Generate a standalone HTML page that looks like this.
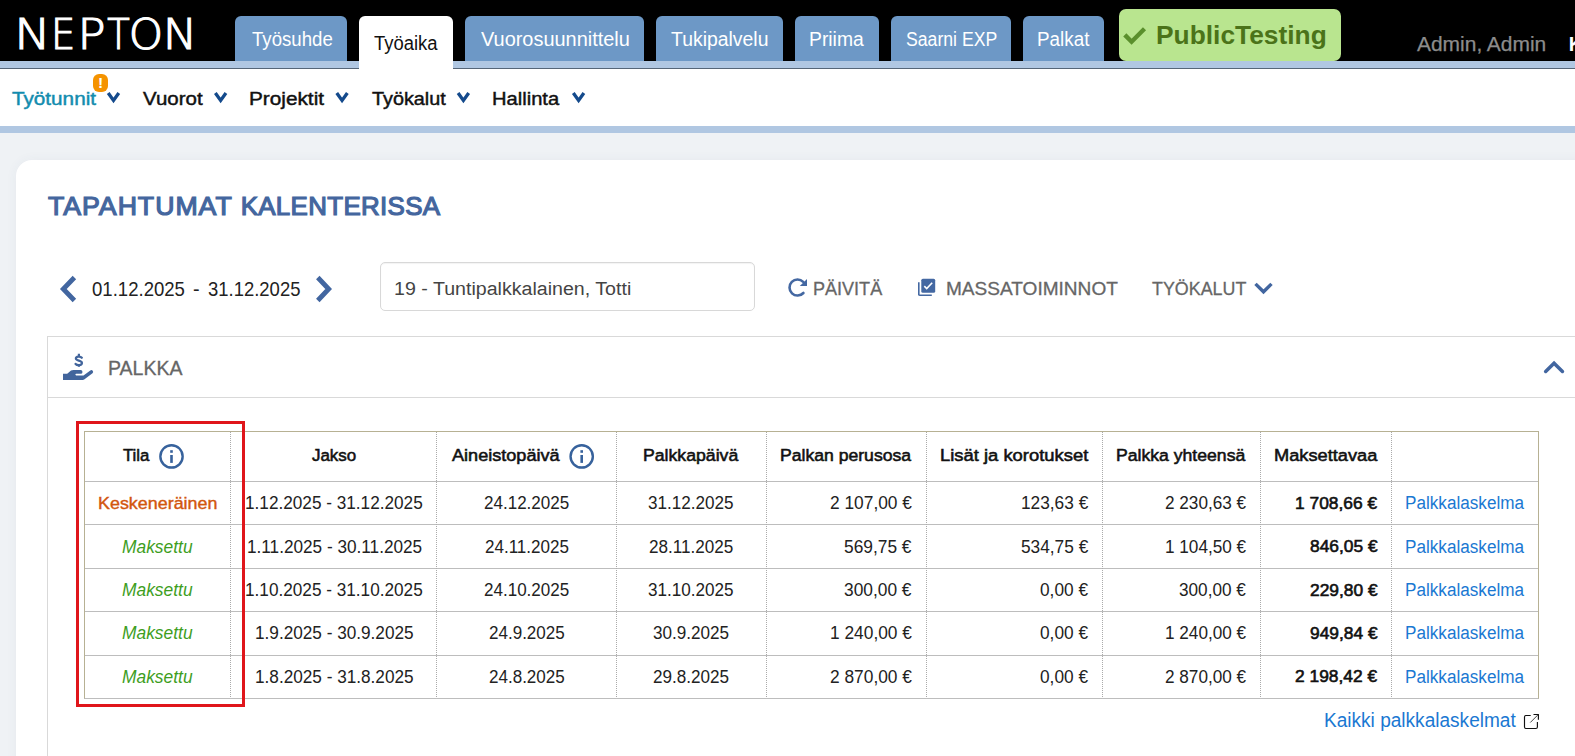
<!DOCTYPE html>
<html lang="fi"><head><meta charset="utf-8"><title>Nepton</title>
<style>
html,body{margin:0;padding:0}
body{width:1575px;height:756px;overflow:hidden;position:relative;background:#eff2f5;font-family:"Liberation Sans",sans-serif}
.a{position:absolute}
.t{position:absolute;white-space:nowrap;transform-origin:0 0}
.tab{position:absolute;top:16px;height:45px;background:#6d98c6;border-radius:6px 6px 0 0}
.vd{position:absolute;top:432px;height:266px;width:1px;background-image:linear-gradient(to bottom,#aaa 50%,transparent 50%);background-size:1px 2px}
.hl{position:absolute;left:85px;width:1453px;height:1px;background:#bdbdbd}
svg{position:absolute;overflow:visible}
</style></head><body>
<!-- header -->
<div class="a" style="left:0;top:0;width:1575px;height:61px;background:#000"></div>
<div class="a" style="left:0;top:61px;width:1575px;height:7px;background:#b0c7e2"></div>
<div class="a" style="left:0;top:68px;width:1575px;height:1px;background:#566678"></div>
<div class="a" style="left:0;top:69px;width:1575px;height:57px;background:#fff"></div>
<div class="a" style="left:0;top:126px;width:1575px;height:7px;background:#b0c7e2"></div>
<div class="tab" style="left:235px;width:112px"></div>
<div class="tab" style="left:359px;width:94px;height:53px;background:#fff"></div>
<div class="tab" style="left:465px;width:179px"></div>
<div class="tab" style="left:656px;width:127px"></div>
<div class="tab" style="left:795px;width:84px"></div>
<div class="tab" style="left:891px;width:120px"></div>
<div class="tab" style="left:1023px;width:81px"></div>
<div class="a" style="left:1119px;top:9px;width:222px;height:52px;background:#b9e58f;border-radius:7px"></div>
<!-- logo -->
<svg width="200" height="61" style="left:0;top:0"><text y="49" font-family="DejaVu Sans, sans-serif" font-weight="200" font-size="42.2" fill="#fff" stroke="#fff" stroke-width="1.2"><tspan x="14.27" textLength="36.38" lengthAdjust="spacingAndGlyphs">N</tspan><tspan x="51.04" textLength="24.27" lengthAdjust="spacingAndGlyphs">E</tspan><tspan x="77.57" textLength="28.08" lengthAdjust="spacingAndGlyphs">P</tspan><tspan x="107.35" textLength="22.46" lengthAdjust="spacingAndGlyphs">T</tspan><tspan x="128.81" textLength="34.35" lengthAdjust="spacingAndGlyphs">O</tspan><tspan x="162.71" textLength="34.54" lengthAdjust="spacingAndGlyphs">N</tspan></text></svg>
<!-- green check -->
<svg style="left:0;top:0" width="1575" height="61"><path d="M1124.8 34.85 L1131.6 41.7 L1144.5 28.8" fill="none" stroke="#5a8f2c" stroke-width="4.4" stroke-linejoin="miter"/></svg>
<!-- badge -->
<div class="a" style="left:93px;top:74px;width:15px;height:18px;border-radius:6px;background:#f59300"></div>
<!-- submenu chevrons -->
<svg style="left:0;top:0" width="600" height="126"><g fill="none" stroke="#144a8c" stroke-width="3.3">
<path d="M108.2 93 l5.3 7.5 l5.3 -7.5"/><path d="M215.35 93 l5.3 7.5 l5.3 -7.5"/><path d="M336.75 93 l5.3 7.5 l5.3 -7.5"/><path d="M458.1 93 l5.3 7.5 l5.3 -7.5"/><path d="M573.3 93 l5.3 7.5 l5.3 -7.5"/>
</g></svg>
<!-- card -->
<div class="a" style="left:16px;top:160px;width:1600px;height:700px;background:#fff;border-radius:16px 0 0 0;box-shadow:0 0 12px rgba(60,80,110,.05)"></div>
<!-- date chevrons -->
<svg style="left:0;top:0" width="1575" height="756"><g fill="none" stroke="#4266a0" stroke-width="4.8" stroke-linejoin="miter">
<path d="M74.4 277.5 L63.3 289 L74.4 300.5"/><path d="M317.8 277.5 L328.7 289 L317.8 300.5"/>
</g>
<g fill="none" stroke="#4266a0" stroke-width="3.4" stroke-linejoin="miter">
<path d="M1255.5 283.9 L1263.5 291.8 L1271.5 283.9"/>
<path d="M1545.65 371.45 L1554.05 363.2 L1562.45 371.45" stroke-width="3.5" stroke-linecap="round"/>
</g></svg>
<!-- input -->
<div class="a" style="left:380px;top:262px;width:373px;height:46.5px;border:1px solid #d8d8d8;box-shadow:inset 0 1px 1px rgba(0,0,0,.05);border-radius:5px;background:#fff"></div>
<!-- refresh icon -->
<svg style="left:788px;top:278px" width="20" height="20" viewBox="0 0 20 20"><path d="M15.2 3.9 A8 8 0 1 0 15.4 15" fill="none" stroke="#4468a2" stroke-width="2.6" stroke-linecap="round"/><path d="M19 1 V7.9 H11.8 Z" fill="#4468a2"/></svg>
<!-- mass icon -->
<svg style="left:917px;top:278px" width="20" height="20" viewBox="0 0 20 20"><rect x="4.3" y="0.7" width="13.9" height="14.1" rx="1.6" fill="#4468a2"/><path d="M1.8 4.3 V16.4 a0.9 0.9 0 0 0 0.9 0.9 H14.8" fill="none" stroke="#4468a2" stroke-width="1.6"/><path d="M7.3 8.1 L9.7 10.5 L15.2 4.7" fill="none" stroke="#fff" stroke-width="1.6"/></svg>
<!-- panel -->
<div class="a" style="left:47px;top:336px;width:1600px;height:500px;border:1px solid #d9d9d9;border-right:0;border-bottom:0"></div>
<div class="a" style="left:48px;top:397px;width:1600px;height:1px;background:#d9d9d9"></div>
<!-- hand icon -->
<svg style="left:63px;top:353px" width="30" height="28" viewBox="0 0 30 28"><path d="M0 20.8 H4.2 L8 17.6 Q9 17 10.5 17 H17.6 a1.9 1.9 0 0 1 0 3.8 H13.2 a0.8 0.8 0 0 0 0 1.6 H20.5 L27.3 17.6 a1.7 1.7 0 0 1 2.2 2.6 L21.2 26.6 Q20.6 27 19.8 27 H0 Z" fill="#42659c"/>
<path d="M18.8 4.7 C17.6 3.2 12.9 3 12.9 5.6 C12.9 8.2 18.9 7.2 18.9 10 C18.9 12.7 14 12.6 12.6 10.9" fill="none" stroke="#42659c" stroke-width="2.3" stroke-linecap="round"/><path d="M15.9 0.8 V3.6 M15.9 11.6 V13.8" fill="none" stroke="#42659c" stroke-width="2.2"/></svg>
<!-- table -->
<div class="a" style="left:84px;top:431px;width:1453px;height:266px;border:1px solid #b7b193;border-bottom-color:#bdbdbd"></div>
<div class="hl" style="top:481px"></div><div class="hl" style="top:524px"></div><div class="hl" style="top:568px"></div><div class="hl" style="top:611px"></div><div class="hl" style="top:655px"></div>
<div class="vd" style="left:230px"></div><div class="vd" style="left:436px"></div><div class="vd" style="left:616px"></div><div class="vd" style="left:766px"></div><div class="vd" style="left:926px"></div><div class="vd" style="left:1102px"></div><div class="vd" style="left:1260px"></div><div class="vd" style="left:1391px"></div>
<!-- info icons -->
<svg style="left:0;top:0" width="700" height="500"><g fill="none" stroke="#37629c" stroke-width="2.4"><circle cx="171.5" cy="456.4" r="11.15"/><circle cx="581.7" cy="456.4" r="11.15"/></g>
<g fill="#37629c"><rect x="170.2" y="450.2" width="2.6" height="2.6"/><rect x="170.2" y="455" width="2.6" height="7.9"/><rect x="580.4" y="450.2" width="2.6" height="2.6"/><rect x="580.4" y="455" width="2.6" height="7.9"/></g></svg>
<!-- red box -->
<div class="a" style="left:76px;top:421px;width:163px;height:279.5px;border:3px solid #e0161b"></div>
<!-- external link icon -->
<svg style="left:0;top:0" width="1575" height="756"><path d="M1530.7 715.45 H1526 a1.5 1.5 0 0 0 -1.5 1.5 V727 a1.5 1.5 0 0 0 1.5 1.5 H1535.9 a1.5 1.5 0 0 0 1.5 -1.5 V721.9" fill="none" stroke="#111" stroke-width="1.15"/><path d="M1533.5 714.5 H1538.4 V719.8" fill="none" stroke="#111" stroke-width="1.15"/><path d="M1530.3 722.5 L1538.2 714.6" fill="none" stroke="#444" stroke-width="1"/></svg>
<header>
<div class="t" style="left:251.62px;top:26.70px;font-size:19.6px;line-height:24px;color:#fff;letter-spacing:0.000px;transform:scaleX(0.9511)">Työsuhde</div>
<div class="t" style="left:373.82px;top:30.50px;font-size:19.6px;line-height:24px;color:#111;letter-spacing:0.000px;transform:scaleX(0.9412)">Työaika</div>
<div class="t" style="left:481.00px;top:26.70px;font-size:19.6px;line-height:24px;color:#fff;letter-spacing:0.000px;transform:scaleX(1.0174)">Vuorosuunnittelu</div>
<div class="t" style="left:671.30px;top:26.70px;font-size:19.6px;line-height:24px;color:#fff;letter-spacing:0.000px;transform:scaleX(0.9906)">Tukipalvelu</div>
<div class="t" style="left:809.02px;top:26.70px;font-size:19.6px;line-height:24px;color:#fff;letter-spacing:0.000px;transform:scaleX(0.9864)">Priima</div>
<div class="t" style="left:905.78px;top:26.70px;font-size:19.6px;line-height:24px;color:#fff;letter-spacing:0.000px;transform:scaleX(0.9011)">Saarni EXP</div>
<div class="t" style="left:1037.46px;top:26.70px;font-size:19.6px;line-height:24px;color:#fff;letter-spacing:0.000px;transform:scaleX(0.9616)">Palkat</div>
<div class="t" style="left:1156.35px;top:19.80px;font-size:26px;line-height:31px;color:#4b7319;letter-spacing:0.000px;font-weight:700;transform:scaleX(1.0131)">PublicTesting</div>
<div class="t" style="left:1416.83px;top:31.77px;font-size:19.65px;line-height:24px;color:#8c8c8c;letter-spacing:0.000px;-webkit-text-stroke:0.25px #8c8c8c;transform:scaleX(1.0666)">Admin, Admin</div>
<div class="t" style="left:1568.70px;top:31.80px;font-size:19.6px;line-height:24px;color:#fff;letter-spacing:0.000px;font-weight:700">K</div>
</header>
<nav>
<div class="t" style="left:11.79px;top:86.58px;font-size:18.97px;line-height:23px;color:#128cae;letter-spacing:0.000px;-webkit-text-stroke:0.45px #128cae;transform:scaleX(1.0921)">Työtunnit</div>
<div class="t" style="left:143.22px;top:86.58px;font-size:18.97px;line-height:23px;color:#111;letter-spacing:0.000px;-webkit-text-stroke:0.45px #111;transform:scaleX(1.0805)">Vuorot</div>
<div class="t" style="left:248.98px;top:86.58px;font-size:18.97px;line-height:23px;color:#111;letter-spacing:0.000px;-webkit-text-stroke:0.45px #111;transform:scaleX(1.0956)">Projektit</div>
<div class="t" style="left:371.61px;top:86.58px;font-size:18.97px;line-height:23px;color:#111;letter-spacing:0.000px;-webkit-text-stroke:0.45px #111;transform:scaleX(1.0453)">Työkalut</div>
<div class="t" style="left:492.33px;top:86.58px;font-size:18.97px;line-height:23px;color:#111;letter-spacing:0.000px;-webkit-text-stroke:0.45px #111;transform:scaleX(1.0621)">Hallinta</div>
<div class="t" style="left:98.00px;top:73.10px;font-size:15.5px;line-height:19px;color:#fff;letter-spacing:0.000px;font-weight:700">!</div>
</nav>
<main>
<div class="t" style="left:48.38px;top:191.40px;font-size:25.92px;line-height:31px;color:#44669e;letter-spacing:0.946px;-webkit-text-stroke:1.2px #44669e;transform:scaleX(1.0300)">TAPAHTUMAT</div>
<div class="t" style="left:240.67px;top:191.40px;font-size:25.92px;line-height:31px;color:#44669e;letter-spacing:0.327px;-webkit-text-stroke:1.2px #44669e">KALENTERISSA</div>
<div class="t" style="left:91.54px;top:277.00px;font-size:19.8px;line-height:24px;color:#222;letter-spacing:0.000px;transform:scaleX(0.9387)">01.12.2025</div>
<div class="t" style="left:193.00px;top:277.00px;font-size:19.8px;line-height:24px;color:#222;letter-spacing:0.000px">-</div>
<div class="t" style="left:207.55px;top:277.00px;font-size:19.8px;line-height:24px;color:#222;letter-spacing:0.000px;transform:scaleX(0.9335)">31.12.2025</div>
<div class="t" style="left:393.97px;top:276.80px;font-size:19.2px;line-height:23px;color:#444;letter-spacing:0.000px;transform:scaleX(1.0219)">19 - Tuntipalkkalainen, Totti</div>
<div class="t" style="left:813.34px;top:276.65px;font-size:19.18px;line-height:23px;color:#666;letter-spacing:0.000px;-webkit-text-stroke:0.3px #666;transform:scaleX(0.9410)">PÄIVITÄ</div>
<div class="t" style="left:945.76px;top:276.65px;font-size:19.18px;line-height:23px;color:#666;letter-spacing:0.000px;-webkit-text-stroke:0.3px #666;transform:scaleX(0.9938)">MASSATOIMINNOT</div>
<div class="t" style="left:1151.78px;top:276.65px;font-size:19.18px;line-height:23px;color:#666;letter-spacing:0.000px;-webkit-text-stroke:0.3px #666;transform:scaleX(0.9320)">TYÖKALUT</div>
<div class="t" style="left:107.83px;top:354.75px;font-size:20.58px;line-height:25px;color:#666;letter-spacing:0.000px;-webkit-text-stroke:0.3px #666;transform:scaleX(0.9477)">PALKKA</div>
<div class="t" style="left:123.48px;top:445.53px;font-size:16.83px;line-height:20px;color:#111;letter-spacing:0.000px;-webkit-text-stroke:0.55px #111;transform:scaleX(0.9968)">Tila</div>
<div class="t" style="left:311.87px;top:446.03px;font-size:16.83px;line-height:20px;color:#111;letter-spacing:0.000px;-webkit-text-stroke:0.55px #111;transform:scaleX(1.0057)">Jakso</div>
<div class="t" style="left:451.77px;top:445.53px;font-size:16.83px;line-height:20px;color:#111;letter-spacing:0.000px;-webkit-text-stroke:0.55px #111;transform:scaleX(1.0749)">Aineistopäivä</div>
<div class="t" style="left:643.31px;top:446.03px;font-size:16.83px;line-height:20px;color:#111;letter-spacing:0.000px;-webkit-text-stroke:0.55px #111;transform:scaleX(1.0499)">Palkkapäivä</div>
<div class="t" style="left:779.72px;top:446.03px;font-size:16.83px;line-height:20px;color:#111;letter-spacing:0.000px;-webkit-text-stroke:0.55px #111;transform:scaleX(1.0455)">Palkan perusosa</div>
<div class="t" style="left:939.65px;top:446.03px;font-size:16.83px;line-height:20px;color:#111;letter-spacing:0.000px;-webkit-text-stroke:0.55px #111;transform:scaleX(1.0930)">Lisät ja korotukset</div>
<div class="t" style="left:1116.21px;top:446.03px;font-size:16.83px;line-height:20px;color:#111;letter-spacing:0.000px;-webkit-text-stroke:0.55px #111;transform:scaleX(1.0468)">Palkka yhteensä</div>
<div class="t" style="left:1273.97px;top:446.03px;font-size:16.83px;line-height:20px;color:#111;letter-spacing:0.000px;-webkit-text-stroke:0.55px #111;transform:scaleX(1.0828)">Maksettavaa</div>
<div class="t" style="left:97.73px;top:493.60px;font-size:17.04px;line-height:20px;color:#d2560e;letter-spacing:0.000px;-webkit-text-stroke:0.4px #d2560e;transform:scaleX(1.0512)">Keskeneräinen</div>
<div class="t" style="left:245.23px;top:492.80px;font-size:17.6px;line-height:21px;color:#222;letter-spacing:0.000px;transform:scaleX(0.9765)">1.12.2025 - 31.12.2025</div>
<div class="t" style="left:483.93px;top:492.80px;font-size:17.6px;line-height:21px;color:#222;letter-spacing:0.000px;transform:scaleX(0.9677)">24.12.2025</div>
<div class="t" style="left:648.42px;top:492.80px;font-size:17.6px;line-height:21px;color:#222;letter-spacing:0.000px;transform:scaleX(0.9712)">31.12.2025</div>
<div class="t" style="left:829.81px;top:492.80px;font-size:17.6px;line-height:21px;color:#222;letter-spacing:0.000px;transform:scaleX(0.9854)">2 107,00 €</div>
<div class="t" style="left:1021.02px;top:492.80px;font-size:17.6px;line-height:21px;color:#222;letter-spacing:0.000px;transform:scaleX(0.9818)">123,63 €</div>
<div class="t" style="left:1164.82px;top:492.80px;font-size:17.6px;line-height:21px;color:#222;letter-spacing:0.000px;transform:scaleX(0.9757)">2 230,63 €</div>
<div class="t" style="left:1295.46px;top:493.50px;font-size:16.76px;line-height:20px;color:#111;letter-spacing:0.000px;-webkit-text-stroke:0.6px #111;transform:scaleX(1.0361)">1 708,66 €</div>
<div class="t" style="left:1404.94px;top:492.80px;font-size:17.6px;line-height:21px;color:#1a78d2;letter-spacing:0.000px;transform:scaleX(0.9737)">Palkkalaskelma</div>
<div class="t" style="left:122.21px;top:536.50px;font-size:17.6px;line-height:21px;color:#3e9e1e;letter-spacing:0.000px;font-style:italic;transform:scaleX(0.9884)">Maksettu</div>
<div class="t" style="left:246.51px;top:536.50px;font-size:17.6px;line-height:21px;color:#222;letter-spacing:0.000px;transform:scaleX(0.9765)">1.11.2025 - 30.11.2025</div>
<div class="t" style="left:484.56px;top:536.50px;font-size:17.6px;line-height:21px;color:#222;letter-spacing:0.000px;transform:scaleX(0.9677)">24.11.2025</div>
<div class="t" style="left:649.00px;top:536.50px;font-size:17.6px;line-height:21px;color:#222;letter-spacing:0.000px;transform:scaleX(0.9712)">28.11.2025</div>
<div class="t" style="left:844.28px;top:536.50px;font-size:17.6px;line-height:21px;color:#222;letter-spacing:0.000px;transform:scaleX(0.9854)">569,75 €</div>
<div class="t" style="left:1021.02px;top:536.50px;font-size:17.6px;line-height:21px;color:#222;letter-spacing:0.000px;transform:scaleX(0.9818)">534,75 €</div>
<div class="t" style="left:1164.82px;top:536.50px;font-size:17.6px;line-height:21px;color:#222;letter-spacing:0.000px;transform:scaleX(0.9757)">1 104,50 €</div>
<div class="t" style="left:1309.94px;top:537.20px;font-size:16.76px;line-height:20px;color:#111;letter-spacing:0.000px;-webkit-text-stroke:0.6px #111;transform:scaleX(1.0361)">846,05 €</div>
<div class="t" style="left:1404.94px;top:536.50px;font-size:17.6px;line-height:21px;color:#1a78d2;letter-spacing:0.000px;transform:scaleX(0.9737)">Palkkalaskelma</div>
<div class="t" style="left:122.21px;top:579.90px;font-size:17.6px;line-height:21px;color:#3e9e1e;letter-spacing:0.000px;font-style:italic;transform:scaleX(0.9884)">Maksettu</div>
<div class="t" style="left:245.23px;top:579.90px;font-size:17.6px;line-height:21px;color:#222;letter-spacing:0.000px;transform:scaleX(0.9765)">1.10.2025 - 31.10.2025</div>
<div class="t" style="left:483.93px;top:579.90px;font-size:17.6px;line-height:21px;color:#222;letter-spacing:0.000px;transform:scaleX(0.9677)">24.10.2025</div>
<div class="t" style="left:648.47px;top:579.90px;font-size:17.6px;line-height:21px;color:#222;letter-spacing:0.000px;transform:scaleX(0.9712)">31.10.2025</div>
<div class="t" style="left:844.28px;top:579.90px;font-size:17.6px;line-height:21px;color:#222;letter-spacing:0.000px;transform:scaleX(0.9854)">300,00 €</div>
<div class="t" style="left:1040.24px;top:579.90px;font-size:17.6px;line-height:21px;color:#222;letter-spacing:0.000px;transform:scaleX(0.9818)">0,00 €</div>
<div class="t" style="left:1179.14px;top:579.90px;font-size:17.6px;line-height:21px;color:#222;letter-spacing:0.000px;transform:scaleX(0.9757)">300,00 €</div>
<div class="t" style="left:1309.94px;top:580.60px;font-size:16.76px;line-height:20px;color:#111;letter-spacing:0.000px;-webkit-text-stroke:0.6px #111;transform:scaleX(1.0361)">229,80 €</div>
<div class="t" style="left:1404.94px;top:579.90px;font-size:17.6px;line-height:21px;color:#1a78d2;letter-spacing:0.000px;transform:scaleX(0.9737)">Palkkalaskelma</div>
<div class="t" style="left:122.21px;top:623.30px;font-size:17.6px;line-height:21px;color:#3e9e1e;letter-spacing:0.000px;font-style:italic;transform:scaleX(0.9884)">Maksettu</div>
<div class="t" style="left:254.79px;top:623.30px;font-size:17.6px;line-height:21px;color:#222;letter-spacing:0.000px;transform:scaleX(0.9765)">1.9.2025 - 30.9.2025</div>
<div class="t" style="left:488.66px;top:623.30px;font-size:17.6px;line-height:21px;color:#222;letter-spacing:0.000px;transform:scaleX(0.9677)">24.9.2025</div>
<div class="t" style="left:653.22px;top:623.30px;font-size:17.6px;line-height:21px;color:#222;letter-spacing:0.000px;transform:scaleX(0.9712)">30.9.2025</div>
<div class="t" style="left:829.81px;top:623.30px;font-size:17.6px;line-height:21px;color:#222;letter-spacing:0.000px;transform:scaleX(0.9854)">1 240,00 €</div>
<div class="t" style="left:1040.24px;top:623.30px;font-size:17.6px;line-height:21px;color:#222;letter-spacing:0.000px;transform:scaleX(0.9818)">0,00 €</div>
<div class="t" style="left:1164.82px;top:623.30px;font-size:17.6px;line-height:21px;color:#222;letter-spacing:0.000px;transform:scaleX(0.9757)">1 240,00 €</div>
<div class="t" style="left:1309.94px;top:624.00px;font-size:16.76px;line-height:20px;color:#111;letter-spacing:0.000px;-webkit-text-stroke:0.6px #111;transform:scaleX(1.0361)">949,84 €</div>
<div class="t" style="left:1404.94px;top:623.30px;font-size:17.6px;line-height:21px;color:#1a78d2;letter-spacing:0.000px;transform:scaleX(0.9737)">Palkkalaskelma</div>
<div class="t" style="left:122.21px;top:666.70px;font-size:17.6px;line-height:21px;color:#3e9e1e;letter-spacing:0.000px;font-style:italic;transform:scaleX(0.9884)">Maksettu</div>
<div class="t" style="left:254.79px;top:666.70px;font-size:17.6px;line-height:21px;color:#222;letter-spacing:0.000px;transform:scaleX(0.9765)">1.8.2025 - 31.8.2025</div>
<div class="t" style="left:488.66px;top:666.70px;font-size:17.6px;line-height:21px;color:#222;letter-spacing:0.000px;transform:scaleX(0.9677)">24.8.2025</div>
<div class="t" style="left:653.12px;top:666.70px;font-size:17.6px;line-height:21px;color:#222;letter-spacing:0.000px;transform:scaleX(0.9712)">29.8.2025</div>
<div class="t" style="left:829.81px;top:666.70px;font-size:17.6px;line-height:21px;color:#222;letter-spacing:0.000px;transform:scaleX(0.9854)">2 870,00 €</div>
<div class="t" style="left:1040.24px;top:666.70px;font-size:17.6px;line-height:21px;color:#222;letter-spacing:0.000px;transform:scaleX(0.9818)">0,00 €</div>
<div class="t" style="left:1164.82px;top:666.70px;font-size:17.6px;line-height:21px;color:#222;letter-spacing:0.000px;transform:scaleX(0.9757)">2 870,00 €</div>
<div class="t" style="left:1295.46px;top:667.40px;font-size:16.76px;line-height:20px;color:#111;letter-spacing:0.000px;-webkit-text-stroke:0.6px #111;transform:scaleX(1.0361)">2 198,42 €</div>
<div class="t" style="left:1404.94px;top:666.70px;font-size:17.6px;line-height:21px;color:#1a78d2;letter-spacing:0.000px;transform:scaleX(0.9737)">Palkkalaskelma</div>
<div class="t" style="left:1324.23px;top:708.80px;font-size:19.4px;line-height:23px;color:#1a78d2;letter-spacing:0.000px;transform:scaleX(0.9831)">Kaikki palkkalaskelmat</div>
</main>
</body></html>
